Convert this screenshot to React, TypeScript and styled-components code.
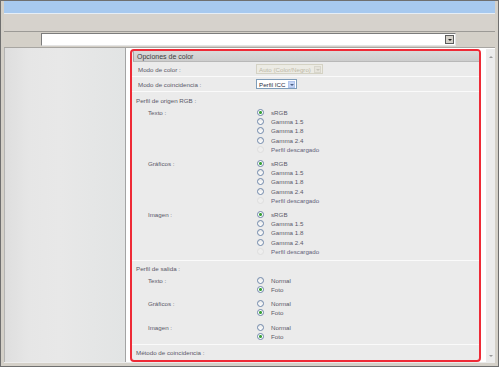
import React from 'react';
import styled, { createGlobalStyle } from 'styled-components';

const GlobalStyle = createGlobalStyle`
  html, body {
    margin: 0;
    padding: 0;
    background: #ffffff;
  }
  body {
    font-family: 'Liberation Sans', Arial, sans-serif;
  }
  * {
    box-sizing: border-box;
  }
`;

type Group = {
  label: string;
  options: string[];
  checked: number;
  disabled?: number;
};

const rgbOptions = ['sRGB', 'Gamma 1.5', 'Gamma 1.8', 'Gamma 2.4', 'Perfil descargado'];
const outOptions = ['Normal', 'Foto'];

const sourceGroups: Group[] = [
  { label: 'Texto :', options: rgbOptions, checked: 0, disabled: 4 },
  { label: 'Gráficos :', options: rgbOptions, checked: 0, disabled: 4 },
  { label: 'Imagen :', options: rgbOptions, checked: 0, disabled: 4 },
];

const outputGroups: Group[] = [
  { label: 'Texto :', options: outOptions, checked: 1 },
  { label: 'Gráficos :', options: outOptions, checked: 1 },
  { label: 'Imagen :', options: outOptions, checked: 1 },
];

function RadioGroup({ group }: { group: Group }) {
  return (
    <GroupRow>
      <GroupLabel>{group.label}</GroupLabel>
      <Options>
        {group.options.map((opt, i) => (
          <Option key={opt} $disabled={group.disabled === i}>
            <Radio $checked={group.checked === i} $disabled={group.disabled === i} />
            {opt}
          </Option>
        ))}
      </Options>
    </GroupRow>
  );
}

export default function App() {
  return (
    <>
      <GlobalStyle />
      <Window>
        <TitleBar />
        <Toolbar />
        <AddressRow>
          <Combo>
            <ComboButton />
          </Combo>
        </AddressRow>
        <Body>
          <SidePanel />
          <Content>
            <Frame>
              <Header>Opciones de color</Header>
              <FieldRow>
                <FieldLabel>Modo de color :</FieldLabel>
                <Select $disabled>
                  Auto (Color/Negro)
                  <SelectArrow $disabled />
                </Select>
              </FieldRow>
              <FieldRow>
                <FieldLabel>Modo de coincidencia :</FieldLabel>
                <Select>
                  Perfil ICC
                  <SelectArrow />
                </Select>
              </FieldRow>
              <Section>
                <SectionTitle>Perfil de origen RGB :</SectionTitle>
                {sourceGroups.map((g) => (
                  <RadioGroup key={g.label} group={g} />
                ))}
              </Section>
              <Section $tight>
                <SectionTitle>Perfil de salida :</SectionTitle>
                {outputGroups.map((g) => (
                  <RadioGroup key={g.label} group={g} />
                ))}
              </Section>
              <Section $tight>
                <SectionTitle>Método de coincidencia :</SectionTitle>
                <GroupRow>
                  <span />
                  <Select $wide />
                </GroupRow>
              </Section>
            </Frame>
            <Scrollbar>
              <Arrow />
              <Arrow $down />
            </Scrollbar>
          </Content>
        </Body>
        <BottomStrip />
      </Window>
    </>
  );
}

const Window = styled.div`
  width: 499px;
  height: 367px;
  border: 1px solid #6f6f6f;
  padding: 0 3px;
  background: #d4d0c8;
  display: flex;
  flex-direction: column;
  overflow: hidden;
`;

const TitleBar = styled.div`
  height: 13px;
  background: #a7c9ef;
  border-bottom: 1px solid #e6eef6;
`;

const Toolbar = styled.div`
  height: 18px;
  background: #d6d2cc;
  border-bottom: 1px solid #9c9a96;
`;

const AddressRow = styled.div`
  height: 16px;
  background: #d4d0c8;
  border-bottom: 1px solid #a8a6a2;
  padding: 1px 0 0 37px;
`;

const Combo = styled.div`
  width: 415px;
  height: 13px;
  background: #ffffff;
  border-top: 1px solid #7c7c7c;
  border-left: 1px solid #7c7c7c;
  border-right: 1px solid #e4e4e4;
  border-bottom: 1px solid #e4e4e4;
  display: flex;
  justify-content: flex-end;
  align-items: center;
  padding-right: 1px;
`;

const ComboButton = styled.div`
  width: 9px;
  height: 9px;
  background: #d4d0c8;
  border: 1px solid #5c5c5c;
  position: relative;
  &::after {
    content: '';
    position: absolute;
    left: 2px;
    top: 3px;
    border-left: 2px solid transparent;
    border-right: 2px solid transparent;
    border-top: 2px solid #202020;
  }
`;

const Body = styled.div`
  flex: 1;
  display: flex;
  min-height: 0;
`;

const SidePanel = styled.div`
  width: 123px;
  border-left: 1px solid #b4b4b4;
  border-right: 1px solid #a4a4a4;
  background: linear-gradient(to right, #dedede 0%, #e6e6e6 20%, #e8e8e8 45%, #e2e4e4 100%);
`;

const Content = styled.div`
  flex: 1;
  display: flex;
  background: #ffffff;
  padding: 1px 0 0 4px;
`;

const Frame = styled.div`
  width: 351px;
  border: 2px solid #ee2a36;
  border-radius: 4px;
  background: #ebebeb;
  overflow: hidden;
  font-size: 6.2px;
  color: #5a5868;
`;

const Header = styled.div`
  height: 11px;
  line-height: 11px;
  margin: 0 0 0 1px;
  padding-left: 3px;
  font-size: 7px;
  color: #3c3c3c;
  background: linear-gradient(#dadada, #cdcdcd);
  border-left: 1px solid #a8a8a8;
  border-bottom: 1px solid #b8b8b8;
`;

const FieldRow = styled.div`
  display: grid;
  grid-template-columns: 124px 1fr;
  align-items: center;
  height: 15px;
  border-bottom: 1px solid #fafafa;
`;

const FieldLabel = styled.span`
  padding-left: 6px;
`;

const Select = styled.div<{ $disabled?: boolean; $wide?: boolean }>`
  display: inline-flex;
  align-items: center;
  justify-self: start;
  gap: 3px;
  height: 10px;
  min-width: ${(p) => (p.$wide ? '50px' : 'auto')};
  padding: 0 1px 0 2px;
  background: ${(p) => (p.$disabled ? '#ecebe4' : '#ffffff')};
  color: ${(p) => (p.$disabled ? '#bcb8a8' : '#2a2a3a')};
  border: 1px solid ${(p) => (p.$disabled ? '#d4d2c4' : '#7f9db9')};
`;

const SelectArrow = styled.span<{ $disabled?: boolean }>`
  width: 7px;
  height: 7px;
  background: ${(p) => (p.$disabled ? '#e6e4dc' : '#c4d4f4')};
  border: 1px solid ${(p) => (p.$disabled ? '#d8d6cc' : '#b0c4ec')};
  position: relative;
  &::after {
    content: '';
    position: absolute;
    left: 1px;
    top: 2px;
    border-left: 2px solid transparent;
    border-right: 2px solid transparent;
    border-top: 2px solid ${(p) => (p.$disabled ? '#c8c6bc' : '#4d6185')};
  }
`;

const Section = styled.div<{ $tight?: boolean }>`
  padding: ${(p) => (p.$tight ? '3px 0 3px' : '4px 0 4px')};
  border-bottom: 1px solid #fafafa;
  display: flex;
  flex-direction: column;
  gap: 5px;
`;

const SectionTitle = styled.div`
  padding-left: 4px;
  line-height: 9px;
  margin-bottom: -2px;
`;

const GroupRow = styled.div`
  display: grid;
  grid-template-columns: 124px 1fr;
`;

const GroupLabel = styled.span`
  padding-left: 16px;
  line-height: 9.2px;
`;

const Options = styled.div`
  display: flex;
  flex-direction: column;
`;

const Option = styled.div<{ $disabled?: boolean }>`
  display: flex;
  align-items: center;
  gap: 7px;
  height: 9.2px;
  color: ${(p) => (p.$disabled ? '#64627a' : 'inherit')};
`;

const Radio = styled.span<{ $checked?: boolean; $disabled?: boolean }>`
  width: 7px;
  height: 7px;
  margin-left: 1px;
  border-radius: 50%;
  border: 1px solid ${(p) => (p.$disabled ? '#dedede' : '#7088aa')};
  background: ${(p) =>
    p.$disabled
      ? '#eeeeee'
      : p.$checked
      ? 'radial-gradient(circle, #3aa03a 0 1.3px, #ffffff 1.6px)'
      : 'linear-gradient(#e8e8e8, #ffffff)'};
`;

const Scrollbar = styled.div`
  width: 9px;
  margin-left: 5px;
  background: #ececec;
  display: flex;
  flex-direction: column;
  justify-content: space-between;
  align-items: center;
  padding: 7px 0 5px;
`;

const Arrow = styled.span<{ $down?: boolean }>`
  width: 0;
  height: 0;
  border-left: 2px solid transparent;
  border-right: 2px solid transparent;
  ${(p) => (p.$down ? 'border-top: 2px solid #9a9a9a;' : 'border-bottom: 2px solid #9a9a9a;')}
`;

const BottomStrip = styled.div`
  height: 4px;
  background: #d4d0c8;
  border-top: 1px solid #ececec;
`;
